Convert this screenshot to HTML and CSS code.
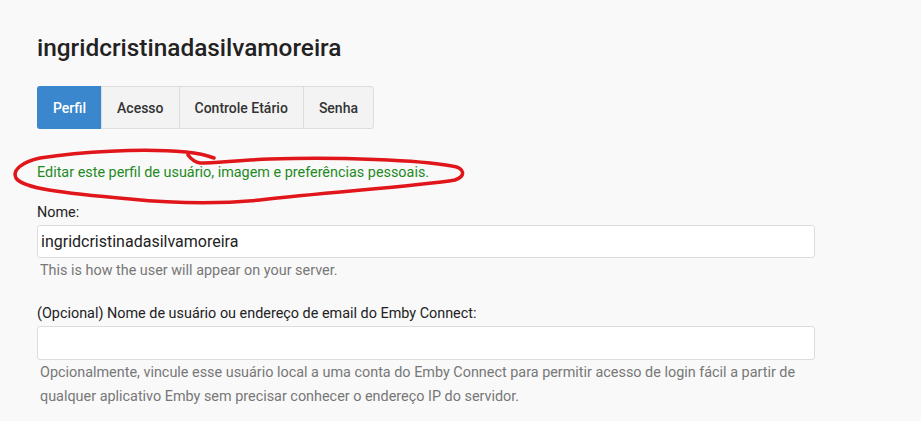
FILE: index.html
```html
<!DOCTYPE html>
<html lang="pt">
<head>
<meta charset="utf-8">
<link rel="stylesheet" href="styles.css">
</head>
<body>
<div class="page">
  <h1 class="title">ingridcristinadasilvamoreira</h1>
  <div class="tabs">
    <div class="tab active">Perfil</div>
    <div class="tab">Acesso</div>
    <div class="tab">Controle Etário</div>
    <div class="tab">Senha</div>
  </div>
  <div class="intro">
    <p class="intro-text">Editar este perfil de usuário, imagem e preferências pessoais.</p>
    <svg class="scribble" width="470" height="70" viewBox="0 140 470 70" xmlns="http://www.w3.org/2000/svg">
      <path d="M214 158 C206 155 196 153 186 152 C140 148 80 152 40 158 C22 162 12 170 16 178 C22 188 60 193 130 199 C170 203 220 204 260 200 C330 192 420 186 455 180 C466 176 465 168 452 166 C420 160 340 157 270 159 C240 160 215 163 200 163 C194 162 191 159 188 155"
        fill="none" stroke="#e0161b" stroke-width="3.5" stroke-linecap="round" stroke-linejoin="round"/>
    </svg>
  </div>
  <div class="field">
    <label class="label">Nome:</label>
    <div class="input">ingridcristinadasilvamoreira</div>
    <div class="help">This is how the user will appear on your server.</div>
  </div>
  <div class="field second">
    <label class="label">(Opcional) Nome de usuário ou endereço de email do Emby Connect:</label>
    <div class="input tall"></div>
    <div class="help">Opcionalmente, vincule esse usuário local a uma conta do Emby Connect para permitir acesso de login fácil a partir de qualquer aplicativo Emby sem precisar conhecer o endereço IP do servidor.</div>
  </div>
</div>
</body>
</html>
```
FILE: styles.css
```css
html, body {
  margin: 0;
  padding: 0;
  background: #f9f9f9;
  font-family: Roboto, "Noto Sans", sans-serif;
  color: #222;
}
.page {
  padding: 32px 0 0 37px;
  width: 778px;
}
.title {
  margin: 0;
  font-size: 24.4px;
  font-weight: 500;
  line-height: 32px;
  color: #222;
}
.tabs {
  display: inline-flex;
  margin-top: 22px;
  border: 1px solid #ddd;
  border-radius: 3px;
  background: #f3f3f3;
  height: 41px;
}
.tab {
  display: flex;
  align-items: center;
  padding: 0 15px;
  font-size: 14px;
  font-weight: 500;
  color: #333;
  border-left: 1px solid #ddd;
}
.tab:first-child {
  border-left: none;
}
.tab.active {
  background: #3a87cd;
  color: #fff;
  margin: -1px 0 -1px -1px;
  padding: 0 15px 0 16px;
  border-radius: 3px 0 0 3px;
}
.intro {
  position: relative;
  margin-top: 34px;
}
.intro-text {
  margin: 0;
  font-size: 14.4px;
  line-height: 20px;
  color: #1f8a1f;
}
.scribble {
  position: absolute;
  left: -37px;
  top: -23px;
}
.field {
  margin-top: 20px;
}
.label {
  display: block;
  font-size: 14.4px;
  line-height: 20px;
  color: #222;
}
.input {
  margin-top: 2px;
  height: 33px;
  box-sizing: border-box;
  background: #fff;
  border: 1px solid #ddd;
  border-radius: 3px;
  padding: 0 3px;
  font-size: 16px;
  line-height: 31px;
  color: #222;
}
.input.tall {
  height: 34px;
}
.help {
  margin-top: 1px;
  padding-left: 3px;
  font-size: 14.4px;
  line-height: 24px;
  color: #777;
}
.second {
  margin-top: 21px;
}
```
